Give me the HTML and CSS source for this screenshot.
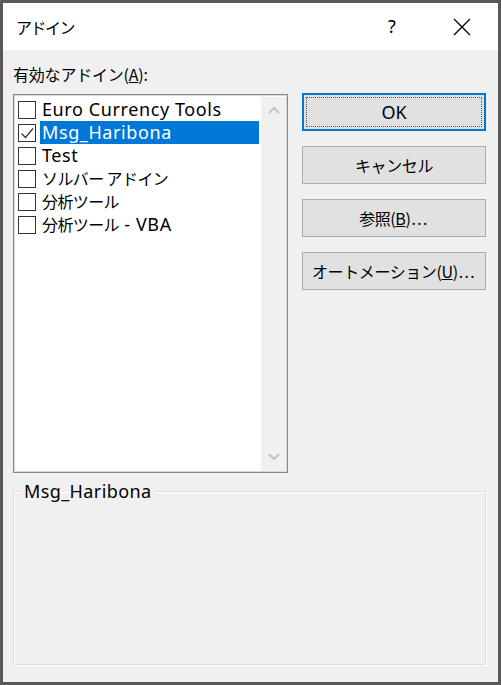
FILE: index.html
```html
<!DOCTYPE html>
<html lang="ja">
<head>
<meta charset="utf-8">
<link rel="stylesheet" href="styles.css">
</head>
<body>
<div class="window">
  <div class="titlebar">
    <span class="title">アドイン</span>
    <span class="help">?</span>
    <span class="close">
      <svg width="18" height="18" viewBox="0 0 18 18"><path d="M1 1 L17 17 M17 1 L1 17" stroke="#000" stroke-width="1.3" fill="none"/></svg>
    </span>
  </div>
  <div class="content">
    <div class="label">有効なアドイン(<u>A</u>):</div>
    <div class="main">
      <div class="listbox">
        <ul class="items">
          <li class="item"><span class="cb"></span><span class="txt">Euro Currency Tools</span></li>
          <li class="item"><span class="cb checked"><svg width="16" height="16" viewBox="0 0 16 16"><path d="M2.5 8.5 L6.5 12.5 L14 3.5" stroke="#333" stroke-width="1.2" fill="none"/></svg></span><span class="txt selected">Msg_Haribona</span></li>
          <li class="item"><span class="cb"></span><span class="txt">Test</span></li>
          <li class="item"><span class="cb"></span><span class="txt"><span class="ja">ソルバー アドイン</span></span></li>
          <li class="item"><span class="cb"></span><span class="txt"><span class="ja">分析ツール</span></span></li>
          <li class="item"><span class="cb"></span><span class="txt"><span class="ja">分析ツール</span> - VBA</span></li>
        </ul>
        <div class="scrollbar">
          <svg class="arrow" width="14" height="10" viewBox="0 0 14 10"><path d="M2 7 L7 2 L12 7" stroke="#c2c2c2" stroke-width="2" fill="none"/></svg>
          <svg class="arrow" width="14" height="10" viewBox="0 0 14 10"><path d="M2 3 L7 8 L12 3" stroke="#c2c2c2" stroke-width="2" fill="none"/></svg>
        </div>
      </div>
      <div class="buttons">
        <button class="btn default"><span class="focus">OK</span></button>
        <button class="btn">キャンセル</button>
        <button class="btn">参照(<u>B</u>)<span class="dots">...</span></button>
        <button class="btn">オートメーション(<u>U</u>)<span class="dots">...</span></button>
      </div>
    </div>
    <fieldset class="group">
      <legend class="legend">Msg_Haribona</legend>
      <div class="desc"></div>
    </fieldset>
  </div>
</div>
</body>
</html>
```

FILE: styles.css
```css
* { box-sizing: border-box; }
html, body { margin: 0; padding: 0; }
body {
  font-family: "Noto Sans", "Noto Sans CJK JP", sans-serif;
  color: #000;
  background: #f0f0f0;
}
.window {
  width: 501px;
  height: 685px;
  border: 3px solid #595959;
  display: flex;
  flex-direction: column;
  background: #f0f0f0;
}
.titlebar {
  height: 47px;
  background: #fff;
  display: flex;
  align-items: center;
  padding-left: 13px;
  flex: none;
}
.title {
  font-family: "Noto Sans CJK JP", sans-serif;
  font-size: 16px;
  letter-spacing: -1.5px;
  flex: 1;
}
.help {
  font-family: "Noto Sans", sans-serif;
  font-size: 18px;
  width: 18px;
  margin-right: 47px;
  margin-top: -1px;
}
.close {
  display: flex;
  margin-right: 27px;
}
.content {
  flex: 1;
  padding: 14px 10px 0 10px;
}
.label {
  font-family: "Noto Sans CJK JP", sans-serif;
  font-size: 16px;
  line-height: 20px;
  height: 20px;
  letter-spacing: -0.2px;
  margin-bottom: 10px;
}
.main {
  display: flex;
  align-items: flex-start;
}
.listbox {
  width: 275px;
  height: 379px;
  border: 1px solid #828790;
  box-shadow: inset 0 0 0 1px #d9d9d9;
  background: #fff;
  display: flex;
  padding: 2px 1px 1px 2px;
}
.items {
  list-style: none;
  margin: 0;
  padding: 1px 0 0 2px;
  flex: 1;
}
.item {
  display: flex;
  align-items: center;
  height: 23px;
}
.cb {
  width: 18px;
  height: 18px;
  border: 1px solid #333;
  background: #fff;
  flex: none;
  display: flex;
  align-items: center;
  justify-content: center;
  margin-right: 4px;
}
.txt {
  font-size: 18px;
  letter-spacing: 0.6px;
  line-height: 23px;
  height: 23px;
  padding-left: 2px;
  white-space: nowrap;
}
.ja {
  font-family: "Noto Sans CJK JP", sans-serif;
  font-size: 16px;
  letter-spacing: -0.6px;
}
.selected {
  background: #0078d7;
  color: #fff;
  flex: 1;
  margin-right: 2px;
}
.scrollbar {
  width: 25px;
  background: #f0f0f0;
  display: flex;
  flex-direction: column;
  justify-content: space-between;
  align-items: center;
  padding: 9px 0 10px;
}
.buttons {
  margin-left: 14px;
  margin-top: -1px;
  width: 184px;
  display: flex;
  flex-direction: column;
  gap: 15px;
}
.btn {
  height: 38px;
  width: 184px;
  background: #e1e1e1;
  border: 1px solid #adadad;
  font-family: "Noto Sans CJK JP", sans-serif;
  font-size: 16px;
  color: #000;
  padding: 0;
  letter-spacing: -0.4px;
}
.dots {
  font-family: "Noto Sans", sans-serif;
  letter-spacing: 1.5px;
  margin-left: 1px;
}
.btn.default {
  border: 2px solid #0078d7;
  padding: 2px;
  display: flex;
}
.focus {
  flex: 1;
  border: 1px dotted #555;
  display: flex;
  align-items: center;
  justify-content: center;
  font-family: "Noto Sans", sans-serif;
  font-size: 18px;
  letter-spacing: 0;
}
.group {
  margin: 8px 0 0 0;
  width: 473px;
  border: 1px solid #dcdcdc;
  box-shadow: 1px 1px 0 #fff, inset 1px 1px 0 #fff;
  padding: 0;
}
.legend {
  font-size: 18px;
  letter-spacing: 0.4px;
  line-height: 20px;
  margin-left: 8px;
  padding: 0 2px;
}
.desc {
  height: 163px;
}
```
